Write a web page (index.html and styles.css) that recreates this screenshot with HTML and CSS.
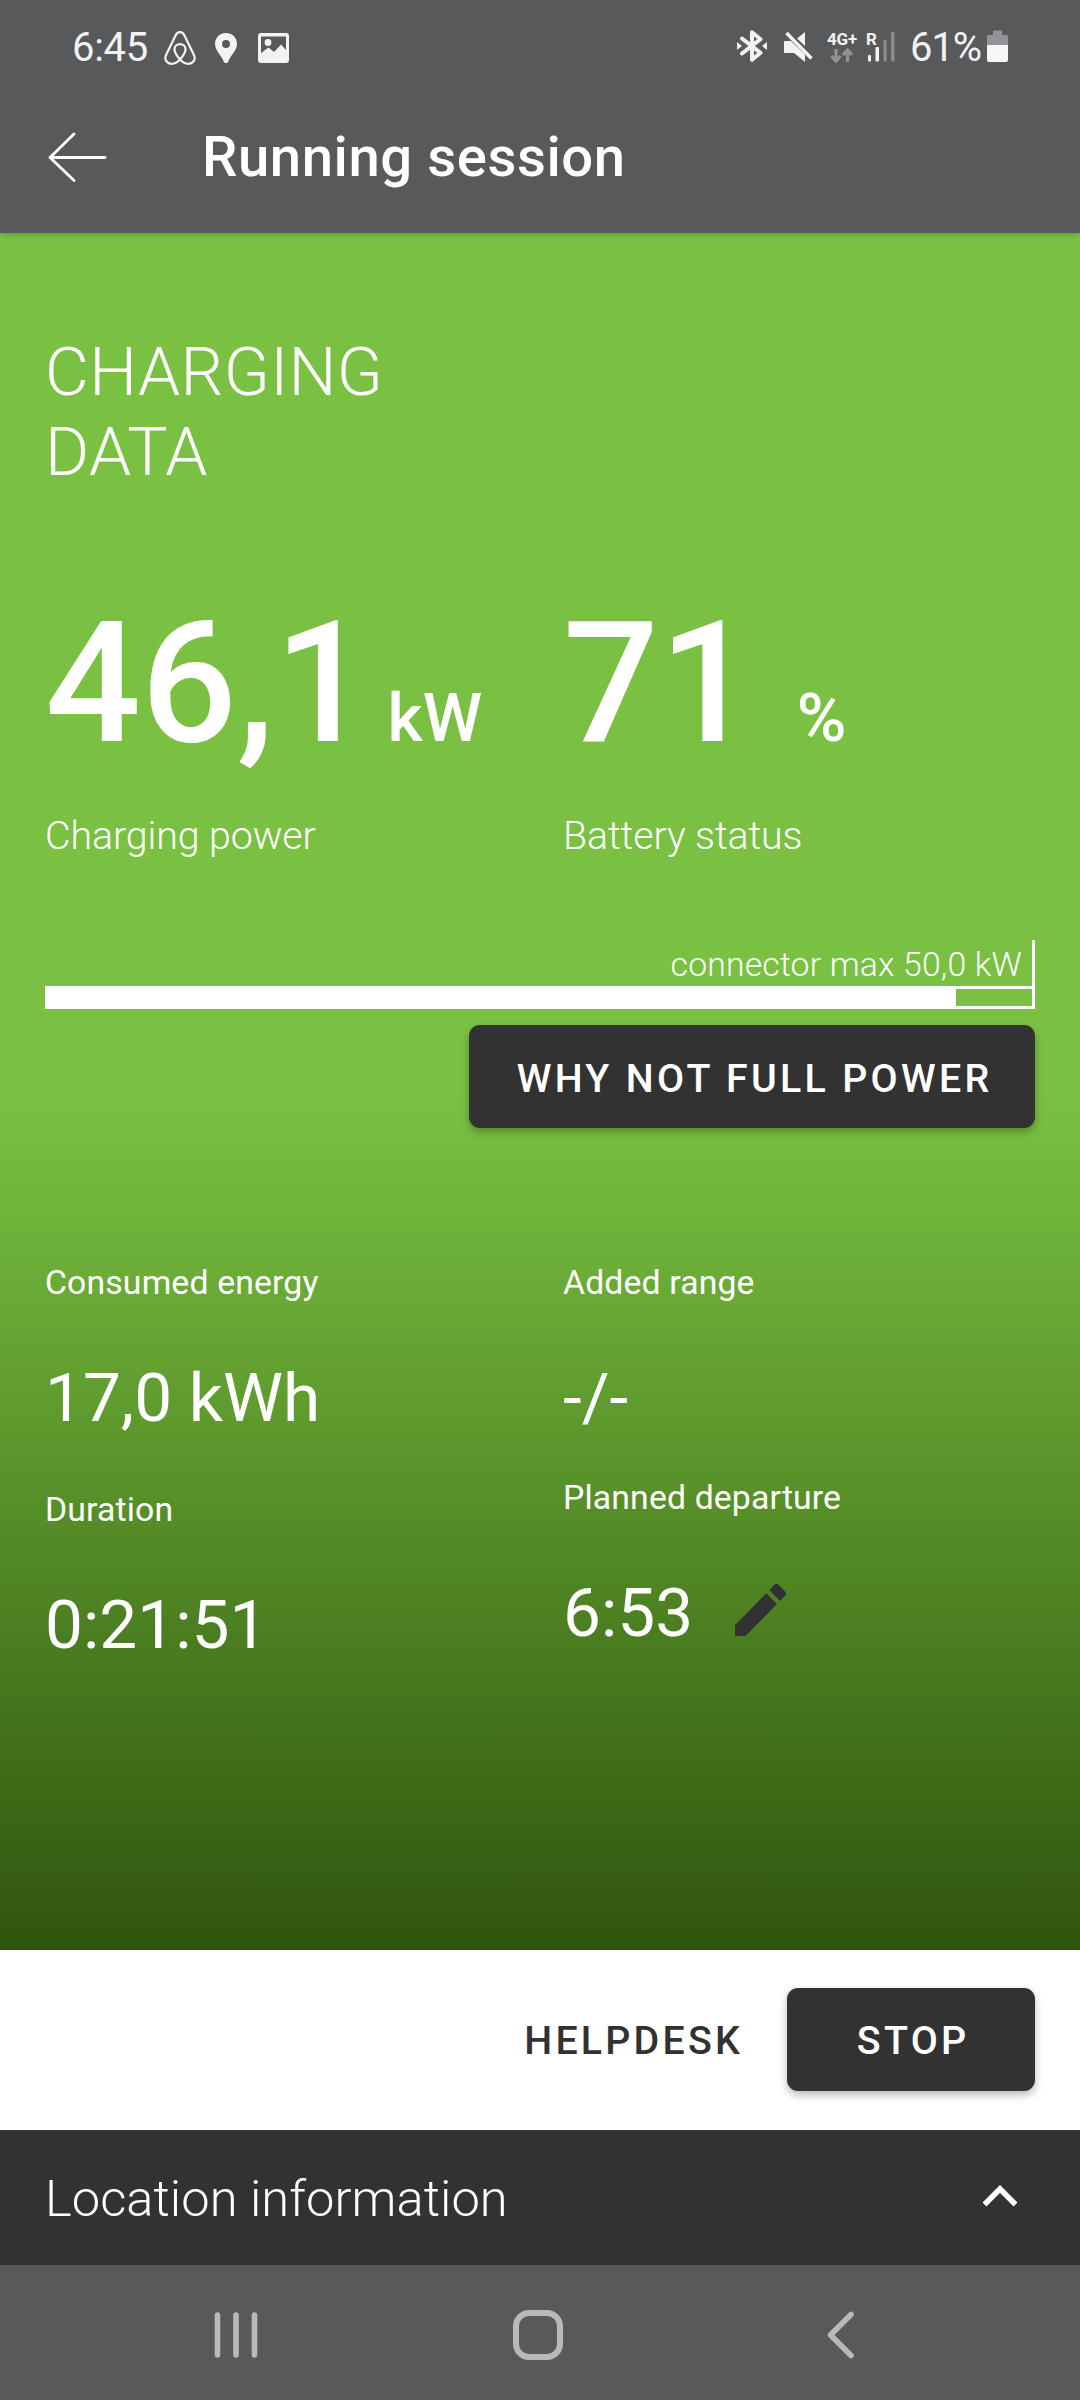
FILE: index.html
```html
<!DOCTYPE html>
<html lang="en">
<head>
<meta charset="utf-8">
<title>Running session</title>
<link rel="stylesheet" href="styles.css">
</head>
<body>
<div class="screen">
  <header class="header">
    <div class="status">
      <div class="status-left">
        <span class="status-text clock">6:45</span>
        <svg class="ic-airbnb" width="32" height="34" viewBox="0 0 32 34" fill="none" stroke="#f2f2f2" stroke-width="2.2" stroke-linejoin="round"><path d="M16 28.5C12.500 24.500 10.500 21 10.500 18.200C10.500 15.200 12.800 13.200 16 13.200S21.500 15.200 21.500 18.200C21.500 21 19.500 24.500 16 28.500C13.200 31.500 10.500 32.800 7.700 32.800C4.200 32.800 1.300 30.300 1.300 27C1.300 25.800 1.600 25 2.200 23.700L11.400 4.700C12.500 2.400 13.700 1.200 16 1.200S19.500 2.400 20.600 4.700L29.800 23.700C30.400 25 30.700 25.800 30.700 27C30.700 30.300 27.800 32.800 24.300 32.800C21.500 32.800 18.800 31.500 16 28.500Z"/></svg>
        <svg class="ic-pin" width="22" height="30" viewBox="0 0 22 30"><path fill="#f2f2f2" fill-rule="evenodd" d="M11 0C4.800 0 0 4.700 0 10.700C0 18 8 24 8.600 28.500Q9 30 11 30T13.400 28.500C14 24 22 18 22 10.700C22 4.700 17.200 0 11 0ZM11 7A4 4 0 1 1 11 15A4 4 0 1 1 11 7Z"/></svg>
        <svg class="ic-photo" width="31" height="30" viewBox="0 0 31 30"><path fill="#f2f2f2" fill-rule="evenodd" d="M3 0H28Q31 0 31 3V27Q31 30 28 30H3Q0 30 0 27V3Q0 0 3 0ZM3 3.500V20L10.500 14.500L16 19L23 11.500L28 17V3.500Z"/><circle cx="10" cy="9.500" r="3.400" fill="#f2f2f2"/></svg>
      </div>
      <div class="status-right">
        <svg class="ic-bluetooth" width="30" height="32" viewBox="0 0 30 32"><path d="M5 8.500L23.500 22.800L15 29.800V2.200L23.500 9.200L5 23.500" fill="none" stroke="#f2f2f2" stroke-width="4" stroke-linejoin="round" stroke-linecap="round"/><path d="M0 12L5 16L0 20ZM30 12L25 16L30 20Z" fill="#f2f2f2"/></svg>
        <svg class="ic-mute" width="30" height="32" viewBox="0 0 30 32"><path d="M1 10H7L21 23.500V31L10 22H1Q0 22 0 21V11Q0 10 1 10ZM13 7.500L21 1V15Z" fill="#f2f2f2"/><path d="M2.500 2L27.500 27.500" stroke="#f2f2f2" stroke-width="3.400"/></svg>
        <div class="network">
          <span class="tiny">4G+</span>
          <svg width="30" height="15" viewBox="0 0 30 15" fill="none" stroke="#929396" stroke-width="3.200"><path d="M9 1V12M4.500 8L9 13L13.500 8M20.500 14V3M16 7L20.500 2L25 7"/></svg>
        </div>
        <div class="signal">
          <span class="tiny roaming">R</span>
          <svg width="29" height="30" viewBox="0 0 29 30"><g fill="#f2f2f2"><rect x="2" y="23" width="3" height="6.500" rx="1"/><rect x="9.500" y="15" width="3.500" height="14.500" rx="1"/></g><g fill="#8b8c8f"><rect x="17.500" y="8" width="3.200" height="21.500" rx="1"/><rect x="25" y="0" width="3.500" height="29.500" rx="1"/></g></svg>
        </div>
        <span class="status-text percent">61%</span>
        <svg class="ic-battery" width="21" height="32" viewBox="0 0 21 32"><path d="M0 6Q0 5 1 5H6V1.500Q6 .5 7 .5H14Q15 .5 15 1.500V5H20Q21 5 21 6V15H0Z" fill="#929396"/><path d="M0 15H21V30Q21 32 19 32H2Q0 32 0 30Z" fill="#f7f7f7"/></svg>
      </div>
    </div>
    <div class="appbar">
      <svg width="59" height="50" viewBox="0 0 59 50" fill="none" stroke="#fff" stroke-width="2.800" stroke-linecap="round" stroke-linejoin="round"><path d="M26 2L2 25.500L26 48.500M2 25.500H57"/></svg>
      <h1 class="title">Running session</h1>
    </div>
  </header>

  <main class="panel">
    <h2 class="heading">CHARGING<br>DATA</h2>
    <div class="columns hero">
      <div>
        <div class="big">46,1<span class="unit unit-kw">kW</span></div>
        <div class="caption">Charging power</div>
      </div>
      <div>
        <div class="big">71<span class="unit unit-pct">%</span></div>
        <div class="caption">Battery status</div>
      </div>
    </div>
    <div class="meter">
      <div class="meter-label">connector max 50,0 kW</div>
      <div class="meter-bar"><div class="meter-fill" style="width: 92.3%"></div></div>
    </div>
    <button class="btn btn-why">WHY NOT FULL POWER</button>
    <div class="columns stats">
      <div>
        <div class="label">Consumed energy</div>
        <div class="value">17,0 kWh</div>
        <div class="label label-duration">Duration</div>
        <div class="value">0:21:51</div>
      </div>
      <div>
        <div class="label">Added range</div>
        <div class="value">-/-</div>
        <div class="label label-departure">Planned departure</div>
        <div class="value departure">6:53
          <svg width="51" height="52" viewBox="3 3 18 18" preserveAspectRatio="none" fill="#323232"><path d="M3 17.250V21h3.750L17.810 9.940l-3.750-3.750L3 17.250zM20.710 7.040a1 1 0 0 0 0-1.410l-2.340-2.340a1 1 0 0 0-1.410 0l-1.830 1.830 3.750 3.750 1.830-1.830z"/></svg>
        </div>
      </div>
    </div>
  </main>

  <div class="actions">
    <button class="btn btn-text">HELPDESK</button>
    <button class="btn btn-stop">STOP</button>
  </div>

  <div class="location">
    <span>Location information</span>
    <svg width="36" height="22" viewBox="0 0 36 22" fill="none" stroke="#fff" stroke-width="5.500"><path d="M2.500 19.500L18 4L33.500 19.500"/></svg>
  </div>

  <nav class="navbar">
    <svg width="46" height="48" viewBox="0 0 46 48" fill="none" stroke="#b9b9ba" stroke-width="5.600" stroke-linecap="round"><path d="M4.500 4V44M23 4V44M41.500 4V44"/></svg>
    <svg width="50" height="50" viewBox="0 0 50 50" fill="none" stroke="#b9b9ba" stroke-width="6"><rect x="3" y="3" width="44" height="44" rx="13"/></svg>
    <svg width="30" height="48" viewBox="0 0 30 48" fill="none" stroke="#b9b9ba" stroke-width="5.600" stroke-linecap="round" stroke-linejoin="round"><path d="M25 3.500L4.500 24L25 44.500"/></svg>
  </nav>
</div>
</body>
</html>
```
FILE: styles.css
```css
* { box-sizing: border-box; }
body { margin: 0; font-family: Roboto, sans-serif; color: #fff; }
h1, h2 { margin: 0; }
svg { display: block; flex: none; }
.screen { display: flex; flex-direction: column; width: 1080px; height: 2400px; overflow: hidden; }

.header { position: relative; height: 233px; background: #58595b; box-shadow: 0 1px 6px rgba(0, 0, 0, .22); }
.status { display: flex; justify-content: space-between; height: 95px; padding: 0 72px; }
.status-left, .status-right { display: flex; align-items: center; }
.status-text { font-size: 40px; line-height: 46px; color: #f2f2f2; }
.clock { width: 92px; letter-spacing: -.3px; }
.ic-bluetooth { margin-top: -3px; }
.ic-pin { margin-left: 19px; }
.ic-photo { margin-left: 21px; }
.ic-mute { margin: -2px 0 0 17px; }
.network { width: 32px; margin-left: 13px; }
.tiny { display: block; font-size: 17px; line-height: 18px; font-weight: 700; color: #f2f2f2; letter-spacing: -.2px; }
.network .tiny { margin-top: -2px; }
.signal { position: relative; width: 29px; margin-left: 7px; }
.signal svg { margin-top: -1px; }
.roaming { position: absolute; left: 0; top: -3px; }
.percent { width: 77px; margin-left: 15px; letter-spacing: -1.100px; }
.ic-battery { margin-top: -3px; }
.appbar { display: flex; align-items: center; height: 124px; padding-left: 48px; }
.title { margin-left: 95px; font-size: 56.250px; line-height: 66px; font-weight: 500; letter-spacing: .55px; }

.panel {
  height: 1717px;
  padding: 99px 45px 0;
  background: linear-gradient(#7ac143 0, #7ac143 860px, #6cae37 1030px, #2f550d 1717px);
}
.heading { font-size: 67.500px; line-height: 80px; font-weight: 300; letter-spacing: .35px; }
.columns { display: grid; grid-template-columns: 518px 1fr; }
.hero { margin-top: 91px; }
.big { display: flex; align-items: baseline; font-size: 168.750px; line-height: 200px; font-weight: 500; }
.unit { font-size: 67.500px; line-height: 80px; }
.unit-kw { margin-left: 17px; }
.unit-pct { margin-left: 42px; }
.caption { margin-top: 30px; font-size: 39.375px; line-height: 46px; font-weight: 300; letter-spacing: -.1px; }
.meter { display: flex; flex-direction: column; justify-content: space-between; height: 69px; margin-top: 81px; border-right: 3px solid #fff; }
.meter-label { padding: 5px 10px 0 0; text-align: right; font-size: 33.750px; line-height: 40px; font-weight: 300; letter-spacing: .18px; }
.meter-bar { height: 23px; border: 3px solid #fff; border-right: 0; }
.meter-fill { height: 100%; background: #fff; }

.btn {
  display: block;
  height: 103px;
  padding: 4px 0 0;
  border: 0;
  border-radius: 11px;
  background: #323232;
  color: #fff;
  font: 500 39.375px/46px Roboto, sans-serif;
  letter-spacing: 3.300px;
  text-indent: 3.300px;
  box-shadow: 0 4px 8px rgba(0, 0, 0, .28);
}
.btn-why { width: 566px; margin: 16px 0 0 auto; padding-left: 2px; }
.stats { margin-top: 135px; }
.label { font-size: 33.750px; line-height: 40px; letter-spacing: .15px; }
.value { margin-top: 55px; font-size: 67.500px; line-height: 80px; }
.label-duration { margin-top: 52px; }
.label-departure { margin-top: 40px; }
.departure { display: flex; align-items: center; gap: 42px; }
.departure svg { margin-top: -6px; }

.actions { display: flex; align-items: center; justify-content: flex-end; height: 180px; padding: 0 45px 2px 0; background: #fff; }
.btn-text { width: 310px; background: none; color: #323232; box-shadow: none; letter-spacing: 3.200px; }
.btn-stop { width: 248px; padding-left: 1px; }
.location { display: flex; align-items: center; justify-content: space-between; height: 135px; padding: 0 62px 0 45px; background: #323232; font-size: 50.625px; line-height: 60px; font-weight: 300; letter-spacing: .05px; }
.location span { padding-top: 3px; }
.location svg { margin-top: -3px; }
.navbar { display: flex; align-items: center; height: 135px; padding: 4px 0 0 213px; background: #58595b; }
.navbar svg + svg { margin-left: 254px; }
.navbar svg:last-child { margin-left: 263px; }
```
